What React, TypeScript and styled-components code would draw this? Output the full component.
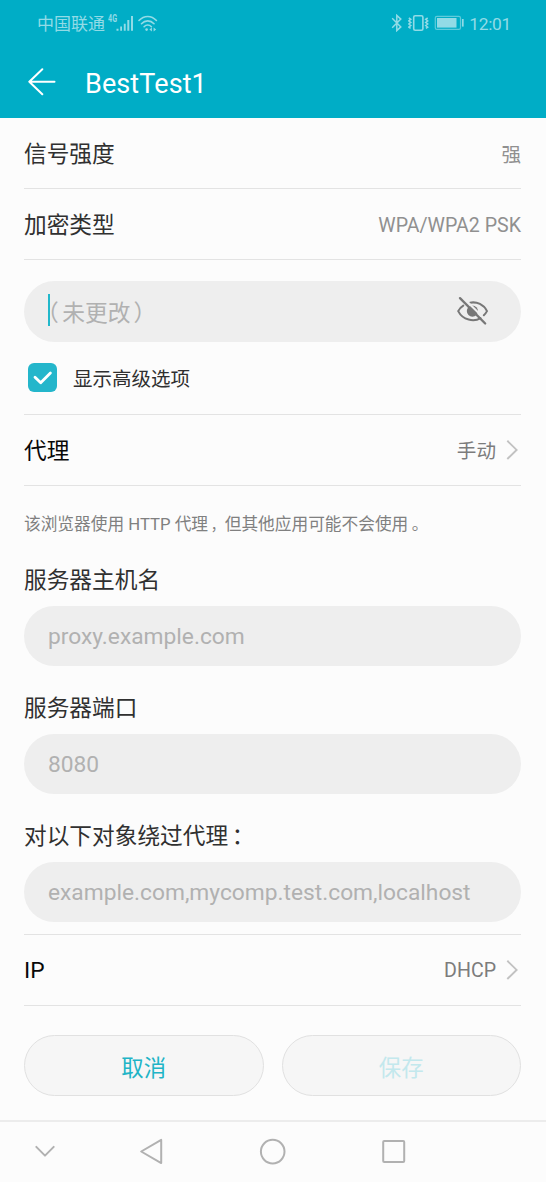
import React from "react";
import styled, { createGlobalStyle } from "styled-components";

const GlobalStyle = createGlobalStyle`
  * { box-sizing: border-box; }
  body {
    margin: 0;
    background: #fcfcfc;
    font-family: Roboto, "Noto Sans CJK SC", sans-serif;
  }
  svg { display: block; flex: none; }
`;

const Screen = styled.div`
  display: flex;
  flex-direction: column;
  width: 100%;
  height: 1182px;
  overflow: hidden;
  background: #fcfcfc;
`;

const Header = styled.header`
  height: 118px;
  background: #00adc6;
  color: #fff;
`;

const StatusBar = styled.div`
  display: flex;
  justify-content: space-between;
  height: 46px;
  padding: 0 35px 0 37px;
  color: #92dbe6;
`;

const StatusGroup = styled.div`
  display: flex;
  align-items: center;
  height: 46px;
`;

const Carrier = styled.span`
  padding-top: 2px;
  font-size: 17px;
  line-height: 24px;
`;

const NetworkType = styled.span`
  align-self: flex-start;
  margin: 14px 0 0 3px;
  width: 8px;
  font: 700 10px/10px Roboto, sans-serif;
  transform: scaleX(0.72);
  transform-origin: 0 0;
`;

const Clock = styled.span`
  margin-left: 5px;
  padding-top: 1px;
  font-size: 17.4px;
  line-height: 24px;
  letter-spacing: -0.3px;
`;

const TitleBar = styled.div`
  display: flex;
  align-items: center;
  gap: 29px;
  height: 72px;
  padding-left: 28px;
`;

const Title = styled.h1`
  margin: 3px 0 0;
  font-size: 27px;
  line-height: 34px;
  font-weight: 400;
  letter-spacing: 0.1px;
`;

const Content = styled.main`
  display: flex;
  flex-direction: column;
  flex: 1;
  padding: 0 25px 0 24px;
`;

const Row = styled.div<{ $strong?: boolean }>`
  display: flex;
  align-items: center;
  justify-content: space-between;
  height: 71px;
  border-bottom: 1px solid #e3e3e3;
  color: ${(p) => (p.$strong ? "#080808" : "#303030")};
`;

const RowLabel = styled.span<{ $latin?: boolean }>`
  padding-top: ${(p) => (p.$latin ? 2 : 4)}px;
  font-size: 22.7px;
  line-height: 32px;
`;

const RowValue = styled.span<{ $dark?: boolean }>`
  display: flex;
  align-items: center;
  gap: 10px;
  font-size: 19.6px;
  line-height: 28px;
  color: ${(p) => (p.$dark ? "#7c7c7c" : "#909090")};
`;

const ValueText = styled.span<{ $latin?: boolean }>`
  padding-top: ${(p) => (p.$latin ? 3 : 5)}px;
`;

const Field = styled.div<{ $top?: number }>`
  display: flex;
  align-items: center;
  justify-content: space-between;
  flex: none;
  height: 60.5px;
  margin-top: ${(p) => p.$top ?? 0}px;
  padding: 0 32px 0 24px;
  border-radius: 31px;
  background: #eee;
  color: #b1b1b1;
  font-size: 22.75px;
`;

const Entry = styled.span`
  display: flex;
  align-items: center;
  padding-top: 2px;
  line-height: 32px;
`;

const Caret = styled.span`
  width: 2px;
  height: 32px;
  margin-top: -4px;
  background: #22b8cb;
`;

const Placeholder = styled.span`
  padding-top: 3px;
`;

const OpenParen = styled.span`
  margin: 0 3.5px 0 -14px;
`;

const CloseParen = styled.span`
  margin-left: 3px;
`;

const Comma = styled.span`
  margin-left: 2.7px;
  font-size: 14px;
`;

const Shifted = styled.span`
  margin-left: 3.5px;
`;

const CheckRow = styled.label`
  display: flex;
  align-items: center;
  gap: 16px;
  height: 73px;
  padding: 0 0 0 4px;
  border-bottom: 1px solid #e3e3e3;
  color: #303030;
  font-size: 19.5px;
  line-height: 28px;
`;

const CheckLabel = styled.span`
  padding-top: 5px;
`;

const CheckBox = styled.span`
  display: grid;
  place-items: center;
  width: 29px;
  height: 29px;
  border-radius: 6px;
  background: #24b6cb;
`;

const Note = styled.p`
  margin: 26px 0 0;
  font-size: 16.7px;
  line-height: 26px;
  color: #808080;
  white-space: nowrap;
`;

const FieldLabel = styled.div<{ $top: number }>`
  margin-top: ${(p) => p.$top}px;
  height: 42px;
  padding-top: 1px;
  font-size: 22.7px;
  line-height: 32px;
  color: #303030;
`;

const BypassGap = styled.div`
  height: 12.5px;
  flex: none;
  border-bottom: 1px solid #e3e3e3;
`;

const Actions = styled.div`
  display: flex;
  gap: 18px;
  margin-top: 29.5px;
`;

const ActionButton = styled.button<{ $disabled?: boolean }>`
  flex: 1;
  height: 61px;
  padding: 0;
  border: 1px solid #e1e1e1;
  border-radius: 31px;
  background: #f6f6f6;
  font-family: inherit;
  font-size: 22.4px;
  color: ${(p) => (p.$disabled ? "#c3e8ed" : "#20b4c6")};
`;

const NavBar = styled.nav`
  display: grid;
  grid-template-columns: 90px 122px 121px 121px;
  place-items: center;
  height: 62px;
  border-top: 2px solid #ececec;
`;

const Chevron = () => (
  <svg width="15" height="20" viewBox="0 0 15 20" fill="none" stroke="#c2c2c2" strokeWidth="1.9">
    <path d="M1.3 .8 10.6 9.9 1.3 19" />
  </svg>
);

const SignalIcon = () => (
  <svg width="18" height="17" viewBox="0 0 18 17" fill="currentColor">
    <path d="M.5 13.7h2v2h-2zM4.2 11.4h1.8v4.3H4.2zM7.8 8.7h1.9v7H7.8zM11.3 5h2v10.7h-2zM15 1h2v14.7h-2z" />
  </svg>
);

const WifiGlyph = styled.svg`
  margin-left: 4px;
`;

const WifiIcon = () => (
  <WifiGlyph width="20" height="17" viewBox="0 0 20 17" fill="none" stroke="currentColor" strokeWidth="1.6" strokeLinecap="round">
    <path d="M1 5.5C6 .1 13.4.1 18.4 5.5M3.5 8.7c3.5-3.8 9-3.8 12.5 0M6.1 11.7c2-2.2 5.2-2.2 7.3 0" />
    <circle cx="8.6" cy="14.6" r="1.3" fill="currentColor" stroke="none" />
    <path d="m13.9 12.4-2.5 2.1 2.5 2.1zM15.6 12.4l2.5 2.1-2.5 2.1z" fill="currentColor" stroke="none" />
  </WifiGlyph>
);

const StatusIcons = styled.div`
  display: flex;
  align-items: center;
  gap: 4.5px;
`;

const BluetoothIcon = () => (
  <svg width="12" height="18" viewBox="0 0 12 18" fill="none" stroke="currentColor" strokeWidth="1.5">
    <path d="m1.2 4.3 8.6 8.6-4 3.7V1.4l4 3.7-8.6 8.6" />
  </svg>
);

const VibrateIcon = () => (
  <svg width="22" height="18" viewBox="0 0 22 18" fill="none" stroke="currentColor">
    <rect x="5.7" y="1.8" width="9.2" height="14.4" rx="1.5" strokeWidth="1.6" />
    <path d="m.8 4 2 1.3-2 1.6 2 1.5-2 1.6 2 1.5-2 1.6 1.8 1.3M19.7 4l-2 1.3 2 1.6-2 1.5 2 1.6-2 1.5 2 1.6-1.8 1.3" strokeWidth="1.5" />
  </svg>
);

const BatteryIcon = () => (
  <svg width="30" height="16" viewBox="0 0 30 16" fill="none">
    <rect x="1.3" y="1.3" width="25.2" height="13" rx="1.6" stroke="currentColor" strokeOpacity=".65" strokeWidth="1.2" />
    <rect x="3" y="3" width="19.5" height="9.6" fill="currentColor" />
    <path d="M28.8 4v7.6" stroke="currentColor" strokeWidth="1.7" />
  </svg>
);

const BackIcon = () => (
  <svg width="28" height="28" viewBox="0 0 28 28" fill="none" stroke="#fff" strokeWidth="2" strokeLinecap="round" strokeLinejoin="round">
    <path d="M14.3 1.2 1.3 13.7 14.3 26.2M1.3 13.7h25.2" />
  </svg>
);

const HiddenIcon = () => (
  <svg width="32" height="32" viewBox="0 -1.5 32 32" fill="none" stroke="#777" strokeWidth="2" strokeLinecap="round">
    <path d="M6.3 9.1C4 10.5 2.2 12.5 1.2 14.6c4.6 9.2 15.8 11 22.4 7M13 6.2c7-1.4 13.7 2 17 8.4-.9 1.7-2 3.1-3.4 4.3" />
    <circle cx="15.4" cy="14.6" r="5.6" fill="#777" stroke="none" />
    <path d="M5.2 .2 30.4 25.2" stroke="#eee" strokeWidth="2.2" />
    <path d="M3 1.6 28.2 27" strokeWidth="2.3" />
  </svg>
);

const CheckIcon = () => (
  <svg width="21" height="17" viewBox="0 0 21 17" fill="none" stroke="#fff" strokeWidth="2.8" strokeLinecap="round" strokeLinejoin="round">
    <path d="m3 8.2 5.7 5.6L18.4 4" />
  </svg>
);

const navIcons = [
  <svg key="hide" width="22" height="22" viewBox="0 0 22 22"><path d="m2.3 5.9 8.7 8.7 8.7-8.7" /></svg>,
  <svg key="back" width="26" height="28" viewBox="0 0 26 28"><path d="M23.2 1.9v23.2L3.2 13.5z" /></svg>,
  <svg key="home" width="28" height="28" viewBox="0 0 28 28"><circle cx="13.7" cy="13.6" r="11.8" /></svg>,
  <svg key="recent" width="26" height="26" viewBox="0 0 26 26"><rect x="2.2" y="2" width="21" height="21" rx="1" /></svg>,
];

const NavButton = styled.span`
  svg {
    fill: none;
    stroke: #b1b1b1;
    stroke-width: 2;
    stroke-linecap: round;
    stroke-linejoin: round;
  }
`;

export default function App() {
  return (
    <Screen>
      <GlobalStyle />
      <Header>
        <StatusBar>
          <StatusGroup>
            <Carrier>中国联通</Carrier>
            <NetworkType>4G</NetworkType>
            <SignalIcon />
            <WifiIcon />
          </StatusGroup>
          <StatusGroup>
            <StatusIcons>
              <BluetoothIcon />
              <VibrateIcon />
              <BatteryIcon />
            </StatusIcons>
            <Clock>12:01</Clock>
          </StatusGroup>
        </StatusBar>
        <TitleBar>
          <BackIcon />
          <Title>BestTest1</Title>
        </TitleBar>
      </Header>

      <Content>
        <Row>
          <RowLabel>信号强度</RowLabel>
          <RowValue>
            <ValueText>强</ValueText>
          </RowValue>
        </Row>
        <Row>
          <RowLabel>加密类型</RowLabel>
          <RowValue>
            <ValueText $latin>WPA/WPA2 PSK</ValueText>
          </RowValue>
        </Row>

        <Field $top={21}>
          <Entry>
            <Caret />
            <Placeholder>
              <OpenParen>（</OpenParen>未更改<CloseParen>）</CloseParen>
            </Placeholder>
          </Entry>
          <HiddenIcon />
        </Field>
        <CheckRow>
          <CheckBox>
            <CheckIcon />
          </CheckBox>
          <CheckLabel>显示高级选项</CheckLabel>
        </CheckRow>

        <Row $strong>
          <RowLabel>代理</RowLabel>
          <RowValue $dark>
            <ValueText>手动</ValueText>
            <Chevron />
          </RowValue>
        </Row>

        <Note>
          该浏览器使用 HTTP 代理<Comma>，</Comma>但其他应用可能不会使用<Shifted>。</Shifted>
        </Note>

        <FieldLabel $top={26}>服务器主机名</FieldLabel>
        <Field>
          <Entry>proxy.example.com</Entry>
        </Field>
        <FieldLabel $top={25.5}>服务器端口</FieldLabel>
        <Field>
          <Entry>8080</Entry>
        </Field>
        <FieldLabel $top={25.5}>
          对以下对象绕过代理<Shifted>：</Shifted>
        </FieldLabel>
        <Field>
          <Entry>example.com,mycomp.test.com,localhost</Entry>
        </Field>
        <BypassGap />

        <Row $strong>
          <RowLabel $latin>IP</RowLabel>
          <RowValue $dark>
            <ValueText $latin>DHCP</ValueText>
            <Chevron />
          </RowValue>
        </Row>

        <Actions>
          <ActionButton>取消</ActionButton>
          <ActionButton $disabled>保存</ActionButton>
        </Actions>
      </Content>

      <NavBar>
        {navIcons.map((icon) => (
          <NavButton key={icon.key}>{icon}</NavButton>
        ))}
      </NavBar>
    </Screen>
  );
}
